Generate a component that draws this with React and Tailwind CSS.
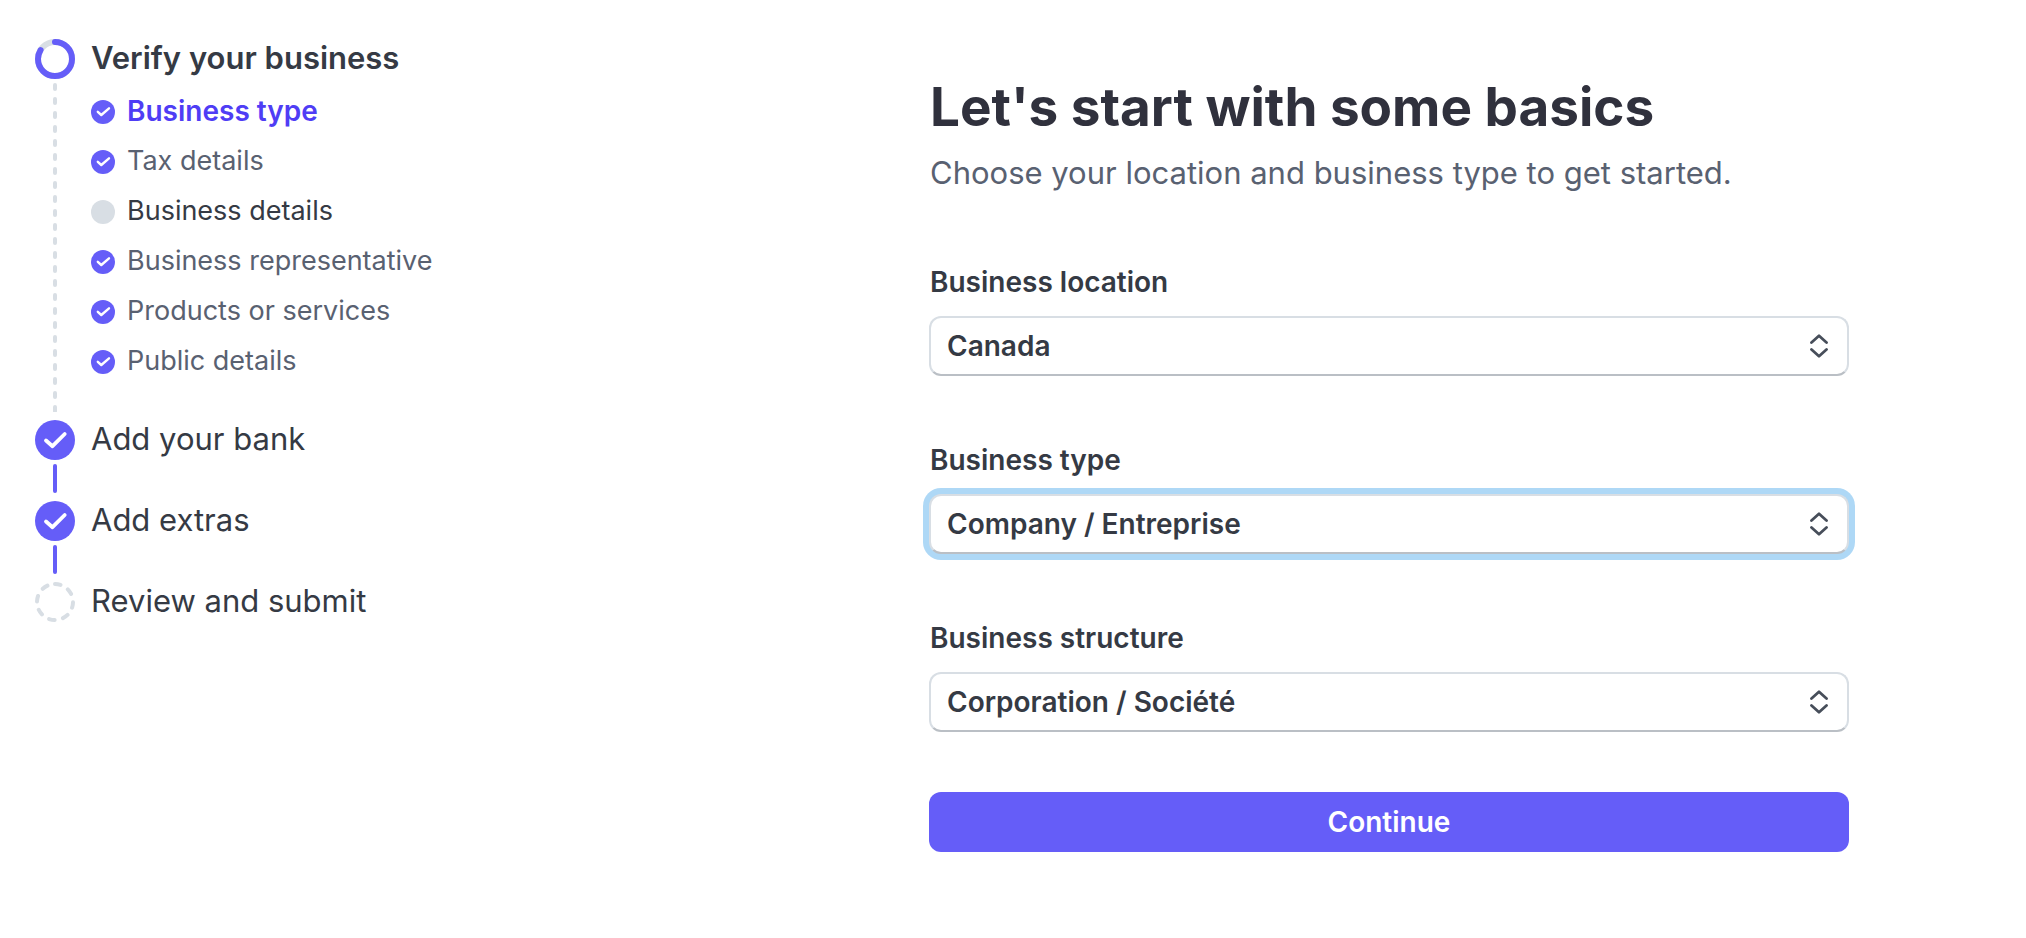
import React, { useState } from "react";
import clsx from "clsx";

const SUBSTEPS = [
  { label: "Business type", status: "done", active: true },
  { label: "Tax details", status: "done" },
  { label: "Business details", status: "pending" },
  { label: "Business representative", status: "done" },
  { label: "Products or services", status: "done" },
  { label: "Public details", status: "done" },
];

const FIELDS = [
  {
    id: "location",
    label: "Business location",
    options: ["Canada", "United States", "United Kingdom"],
  },
  {
    id: "type",
    label: "Business type",
    options: ["Company / Entreprise", "Individual / Particulier"],
    highlighted: true,
  },
  {
    id: "structure",
    label: "Business structure",
    options: ["Corporation / Société", "Partnership / Société de personnes"],
  },
];

function ProgressRing() {
  return (
    <svg viewBox="0 0 40 40" fill="none" className="size-10 shrink-0" aria-hidden="true">
      <circle cx="20" cy="20" r="17" stroke="#d8dee4" strokeWidth="6" />
      <circle
        cx="20"
        cy="20"
        r="17"
        stroke="#655df8"
        strokeWidth="6"
        strokeLinecap="round"
        strokeDasharray="89 107"
        transform="rotate(-90 20 20)"
      />
    </svg>
  );
}

function StepCheck() {
  return (
    <svg viewBox="0 0 40 40" fill="none" className="size-10 shrink-0" aria-hidden="true">
      <circle cx="20" cy="20" r="20" fill="#655df8" />
      <path
        d="M11 20.5 17.5 26.2 29.7 14"
        stroke="#fff"
        strokeWidth="3.8"
        strokeLinecap="round"
        strokeLinejoin="round"
      />
    </svg>
  );
}

function DashedRing() {
  return (
    <svg viewBox="0 0 40 40" fill="none" className="size-10 shrink-0" aria-hidden="true">
      <circle
        cx="20"
        cy="20"
        r="18"
        stroke="#d8dee4"
        strokeWidth="4"
        strokeLinecap="round"
        strokeDasharray="5.6 8.537"
        transform="rotate(-90 20 20)"
      />
    </svg>
  );
}

function SubstepIcon({ status }) {
  if (status === "pending") {
    return <span className="size-6 shrink-0 rounded-full bg-[#d8dee4]" />;
  }
  return (
    <svg viewBox="0 0 24 24" fill="none" className="size-6 shrink-0" aria-hidden="true">
      <circle cx="12" cy="12" r="12" fill="#655df8" />
      <path
        d="M6.8 11.8 10.3 15 18 8.3"
        stroke="#fff"
        strokeWidth="2.4"
        strokeLinecap="round"
        strokeLinejoin="round"
      />
    </svg>
  );
}

function Connector({ dashed }) {
  if (!dashed) return <span className="mt-1 mb-2 w-1 flex-1 rounded-full bg-[#655df8]" />;
  return (
    <svg className="mt-1 mb-2 min-h-0 w-1 flex-1" aria-hidden="true">
      <line
        x1="2"
        x2="2"
        y1="2"
        y2="100%"
        stroke="#d8dee4"
        strokeWidth="4"
        strokeLinecap="round"
        strokeDasharray="4 10"
      />
    </svg>
  );
}

function Step({ icon, title, connector, current, children }) {
  return (
    <li className={clsx("flex gap-4", connector && "min-h-[81px]")}>
      <div className="flex w-10 shrink-0 flex-col items-center">
        {icon}
        {connector && <Connector dashed={connector === "dashed"} />}
      </div>
      <div>
        <a
          href="#step"
          className={clsx("block text-[31px] leading-[38px]", current ? "font-semibold" : "font-normal")}
        >
          {title}
        </a>
        {children}
      </div>
    </li>
  );
}

function SelectField({ id, label, options, highlighted }) {
  const [value, setValue] = useState(options[0]);
  return (
    <div className="flex flex-col gap-4">
      <label htmlFor={id} className="pl-px text-[28px] leading-9 font-semibold">
        {label}
      </label>
      <div className="relative">
        <select
          id={id}
          value={value}
          onChange={(event) => setValue(event.target.value)}
          className={clsx(
            "block h-15 w-full appearance-none rounded-xl border-2 border-[#d8dee4] border-b-[#babfc5] bg-white pr-16 pl-4 text-[28px] font-semibold outline-none focus:ring-6 focus:ring-[#aed8f6]",
            highlighted && "ring-6 ring-[#aed8f6]"
          )}
        >
          {options.map((option) => (
            <option key={option}>{option}</option>
          ))}
        </select>
        <svg
          viewBox="0 0 20 24"
          fill="none"
          className="pointer-events-none absolute inset-y-0 right-5 my-auto h-6 w-5"
          aria-hidden="true"
        >
          <path
            d="M2.5 8.5 10 1.8 17.5 8.5M2.5 15.5 10 22.2 17.5 15.5"
            stroke="#474e5a"
            strokeWidth="2.8"
            strokeLinecap="round"
            strokeLinejoin="round"
          />
        </svg>
      </div>
    </div>
  );
}

export default function App() {
  return (
    <div className="flex min-h-screen flex-col bg-white font-[Inter,'Liberation_Sans',sans-serif] text-[#353a44] lg:flex-row">
      <nav className="pt-[39px] pl-[35px] lg:w-[752px]" aria-label="Onboarding steps">
        <ol>
          <Step icon={<ProgressRing />} title="Verify your business" connector="dashed" current>
            <ul className="pt-2.5 pb-[33px]">
              {SUBSTEPS.map(({ label, status, active }) => (
                <li key={label} className="flex h-[50px] items-center gap-3">
                  <SubstepIcon status={status} />
                  <a
                    href="#substep"
                    className={clsx(
                      "pb-0.5 leading-9",
                      active ? "text-[28px] font-semibold text-[#4f3df5]" : "text-[27px]",
                      !active && status === "done" && "text-[#596171]"
                    )}
                  >
                    {label}
                  </a>
                </li>
              ))}
            </ul>
          </Step>
          <Step icon={<StepCheck />} title="Add your bank" connector="solid" />
          <Step icon={<StepCheck />} title="Add extras" connector="solid" />
          <Step icon={<DashedRing />} title="Review and submit" />
        </ol>
      </nav>

      <main className="flex flex-1 justify-center px-6 pt-[75px] pb-12">
        <form className="w-full max-w-[920px]" onSubmit={(event) => event.preventDefault()}>
          <h1 className="pl-px text-[53px] leading-[64px] font-bold text-[#30313d]">
            Let's start with some basics
          </h1>
          <p className="mt-3.5 pl-px text-[31px] leading-10 text-[#596171]">
            Choose your location and business type to get started.
          </p>
          <div className="mt-[71px] flex flex-col gap-[66px]">
            {FIELDS.map((field) => (
              <SelectField key={field.id} {...field} />
            ))}
          </div>
          <button
            type="submit"
            className="mt-15 h-15 w-full rounded-xl bg-[#655df8] text-[28px] font-semibold text-white"
          >
            Continue
          </button>
        </form>
      </main>
    </div>
  );
}
